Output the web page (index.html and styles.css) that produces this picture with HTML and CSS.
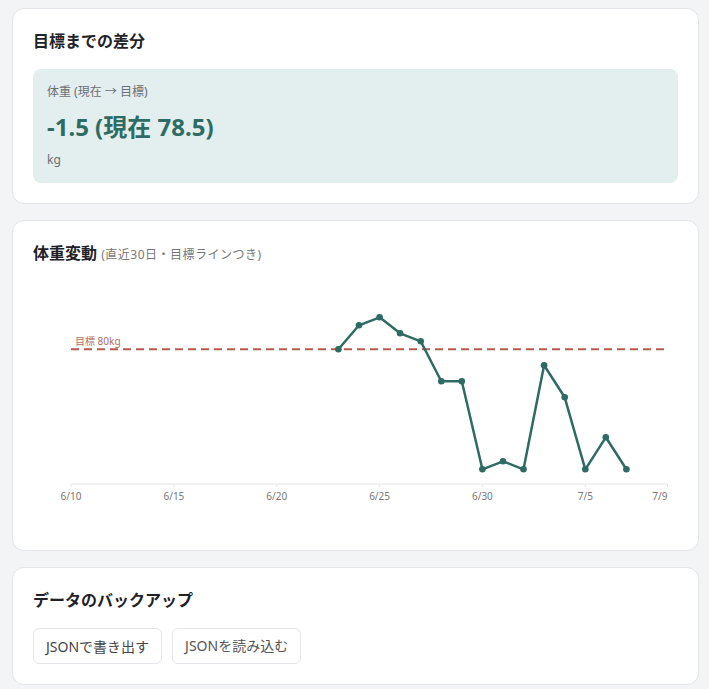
FILE: index.html
```html
<!DOCTYPE html>
<html lang="ja">
  <head>
    <meta charset="UTF-8" />
    <meta name="viewport" content="width=device-width, initial-scale=1.0" />
    <title>体重管理</title>
    <link rel="stylesheet" href="styles.css">
  </head>
  <body>
    <main class="page">
      <section class="card">
        <h2 class="card-title">目標までの差分</h2>
        <div class="diff-box">
          <div class="diff-label">体重 (現在 → 目標)</div>
          <div class="diff-value">-1.5 (現在 78.5)</div>
          <div class="diff-unit">kg</div>
        </div>
      </section>

      <section class="card">
        <h2 class="card-title">体重変動 <span class="card-sub">(直近30日・目標ラインつき)</span></h2>
        <svg class="chart" viewBox="0 0 645 255" width="645" height="255">
          <line class="axis" x1="38" y1="209" x2="634.5" y2="209" />
          <g class="ticks">
            <line x1="38" y1="209" x2="38" y2="212" />
            <line x1="140.9" y1="209" x2="140.9" y2="212" />
            <line x1="243.7" y1="209" x2="243.7" y2="212" />
            <line x1="346.6" y1="209" x2="346.6" y2="212" />
            <line x1="449.4" y1="209" x2="449.4" y2="212" />
            <line x1="552.3" y1="209" x2="552.3" y2="212" />
            <line x1="634.5" y1="209" x2="634.5" y2="212" />
          </g>
          <g class="tick-labels">
            <text x="38" y="224.5">6/10</text>
            <text x="140.9" y="224.5">6/15</text>
            <text x="243.7" y="224.5">6/20</text>
            <text x="346.6" y="224.5">6/25</text>
            <text x="449.4" y="224.5">6/30</text>
            <text x="552.3" y="224.5">7/5</text>
            <text x="634.5" y="224.5" class="last">7/9</text>
          </g>
          <line class="goal" x1="38" y1="74.3" x2="634.5" y2="74.3" />
          <text class="goal-label" x="42" y="69.5">目標 80kg</text>
          <polyline class="line" points="305.4,74.3 326,50.3 346.6,42.3 367.1,58.3 387.7,66.3 408.3,106.3 428.8,106.3 449.4,194.3 470,186.3 490.5,194.3 511.1,90.3 531.7,122.3 552.3,194.3 572.8,162.3 593.4,194.3" />
          <g class="dots">
            <circle cx="305.4" cy="74.3" r="3.3" />
            <circle cx="326" cy="50.3" r="3.3" />
            <circle cx="346.6" cy="42.3" r="3.3" />
            <circle cx="367.1" cy="58.3" r="3.3" />
            <circle cx="387.7" cy="66.3" r="3.3" />
            <circle cx="408.3" cy="106.3" r="3.3" />
            <circle cx="428.8" cy="106.3" r="3.3" />
            <circle cx="449.4" cy="194.3" r="3.3" />
            <circle cx="470" cy="186.3" r="3.3" />
            <circle cx="490.5" cy="194.3" r="3.3" />
            <circle cx="511.1" cy="90.3" r="3.3" />
            <circle cx="531.7" cy="122.3" r="3.3" />
            <circle cx="552.3" cy="194.3" r="3.3" />
            <circle cx="572.8" cy="162.3" r="3.3" />
            <circle cx="593.4" cy="194.3" r="3.3" />
          </g>
        </svg>
      </section>

      <section class="card">
        <h2 class="card-title">データのバックアップ</h2>
        <div class="backup-buttons">
          <button class="btn">JSONで書き出す</button>
          <label class="btn btn-file">JSONを読み込む<input type="file" accept=".json" /></label>
        </div>
      </section>
    </main>
  </body>
</html>
```

FILE: styles.css
```css
html{
    box-sizing: border-box;
}
*, *::before, *::after{
    box-sizing: inherit;
}

body{
    margin: 0;
    background: #f3f4f6;
    color: #1f2328;
    font-family: "Noto Sans", "Noto Sans CJK JP", sans-serif;
}

.page{
    display: flex;
    flex-direction: column;
    gap: 16px;
    padding: 8px 10px 8px 12px;
}

.card{
    background: #fff;
    border: 1px solid #e3e5e8;
    border-radius: 12px;
    padding: 20px;
}

.card-title{
    margin: 0;
    font-size: 16px;
    line-height: 24px;
    font-weight: 700;
    color: #1f2328;
}
.card-sub{
    font-size: 12px;
    font-weight: 400;
    color: #777;
    letter-spacing: 0.5px;
}

/* goal diff */
.diff-box{
    margin-top: 16px;
    background: #e3eeee;
    border-radius: 8px;
    padding: 14px;
}
.diff-label{
    font-size: 12px;
    line-height: 18px;
    color: #6b7075;
}
.diff-value{
    margin-top: 9px;
    font-size: 24px;
    line-height: 34px;
    font-weight: 700;
    color: #2e6b63;
}
.diff-unit{
    margin-top: 7px;
    font-size: 12px;
    line-height: 18px;
    color: #6b7075;
}

/* chart */
.chart{
    display: block;
    margin-top: 8px;
    overflow: visible;
}
.axis, .ticks line{
    stroke: #e3e6ea;
    stroke-width: 1;
}
.tick-labels text{
    font-size: 10px;
    fill: #777;
    text-anchor: middle;
}
.tick-labels .last{
    text-anchor: end;
}
.goal{
    stroke: #b65a4d;
    stroke-width: 2;
    stroke-dasharray: 8 5;
}
.goal-label{
    font-size: 10px;
    fill: #b06e60;
}
.line{
    fill: none;
    stroke: #2e6b63;
    stroke-width: 2.5;
    stroke-linejoin: round;
}
.dots circle{
    fill: #2e6b63;
}

/* backup */
.backup-buttons{
    display: flex;
    gap: 10px;
    margin-top: 16px;
}
.btn{
    display: inline-flex;
    align-items: center;
    height: 36px;
    padding: 0 12px;
    font-family: inherit;
    font-size: 14px;
    color: #444;
    background: #fff;
    border: 1px solid #e3e5e8;
    border-radius: 6px;
    cursor: pointer;
}
.btn-file{
    color: #555;
    padding-bottom: 2px;
}
.btn-file input{
    display: none;
}
```
